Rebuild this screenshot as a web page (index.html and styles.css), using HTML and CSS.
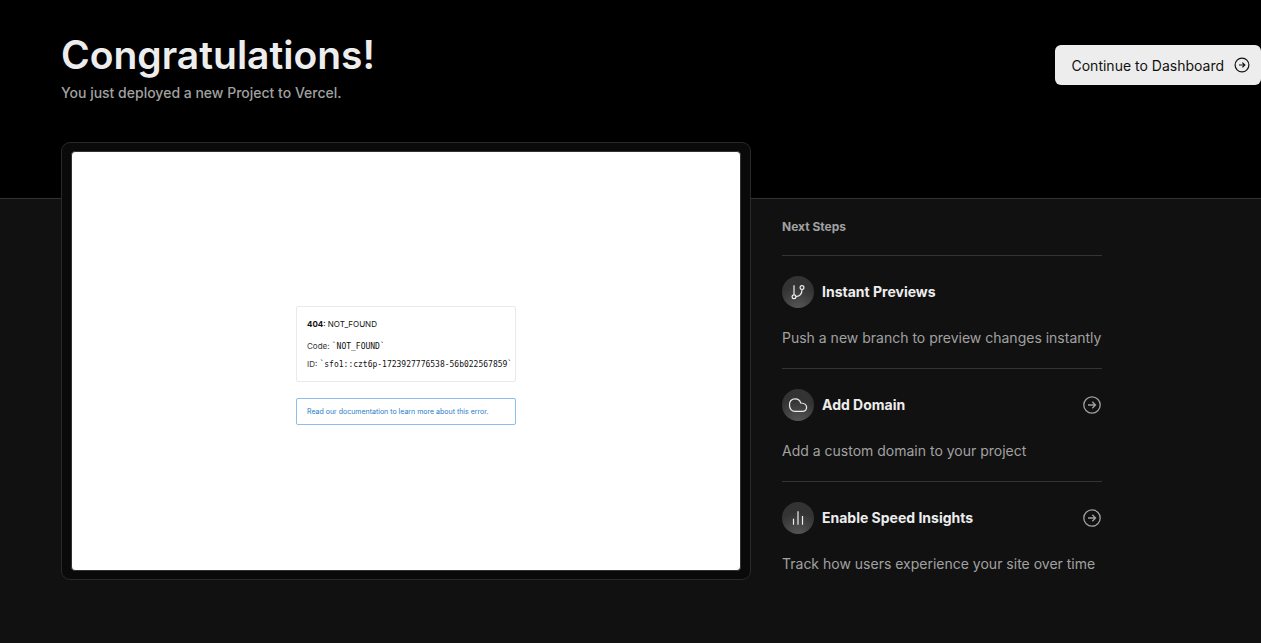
FILE: index.html
```html
<!DOCTYPE html>
<html lang="en">
<head>
<meta charset="utf-8">
<meta name="viewport" content="width=device-width, initial-scale=1">
<title>Congratulations!</title>
<link rel="stylesheet" href="styles.css">
</head>
<body>
<svg class="sprite" aria-hidden="true">
  <symbol id="arrow-circle" viewBox="0 0 18 18">
    <circle cx="9" cy="9" r="8.2"/>
    <path d="M5 9h7.500M9.300 5.800L12.500 9l-3.200 3.200"/>
  </symbol>
</svg>
<header class="hero">
  <div class="intro">
    <h1 class="title">Congratulations!</h1>
    <p class="subtitle">You just deployed a new Project to Vercel.</p>
  </div>
  <button class="continue" type="button">Continue to Dashboard
    <svg class="continue-icon" viewBox="0 0 16 16" aria-hidden="true"><circle cx="8" cy="8" r="6.9"/><path d="M5 8h5.800M8.400 5.600L10.800 8l-2.400 2.400"/></svg>
  </button>
</header>
<main class="content">
  <section class="preview">
    <div class="screen">
      <div class="error">
        <div class="error-box">
          <p class="error-title"><strong>404</strong>: NOT_FOUND</p>
          <p class="error-line">Code: <code>`NOT_FOUND`</code></p>
          <p class="error-line">ID: <code>`sfo1::czt6p-1723927776538-56b022567859`</code></p>
        </div>
        <a class="error-link" href="#">Read our documentation to learn more about this error.</a>
      </div>
    </div>
  </section>
  <aside class="steps">
    <h2 class="steps-title">Next Steps</h2>
    <article class="step">
      <div class="step-head">
        <span class="badge"><svg class="badge-icon" viewBox="0 0 20 20" aria-hidden="true"><path d="M6 3.200v9.600"/><circle cx="6" cy="14.700" r="1.900"/><circle cx="14" cy="5.600" r="1.900"/><path d="M14 7.500c0 3.800-2.300 6.800-6.100 7.200"/></svg></span>
        <h3 class="step-name">Instant Previews</h3>
      </div>
      <p class="step-text">Push a new branch to preview changes instantly</p>
    </article>
    <article class="step">
      <div class="step-head">
        <span class="badge"><svg class="badge-icon" viewBox="0 0 20 20" aria-hidden="true"><path d="M7 16.400C3.600 16.400 1.500 13.700 1.500 10 1.500 6.300 3.800 3.900 7.200 3.900c2.900 0 4.800 1.500 5.500 4.100 3.700.2 5.900 1.700 5.900 4.300 0 2.500-1.700 4.100-4.300 4.100z"/></svg></span>
        <h3 class="step-name">Add Domain</h3>
        <a class="step-link" href="#" aria-label="Add Domain"><svg class="step-arrow"><use href="#arrow-circle"/></svg></a>
      </div>
      <p class="step-text">Add a custom domain to your project</p>
    </article>
    <article class="step">
      <div class="step-head">
        <span class="badge"><svg class="badge-icon" viewBox="0 0 20 20" aria-hidden="true"><path d="M5.500 10.800v6M10 3.200v13.600M14.500 8v8.800"/></svg></span>
        <h3 class="step-name">Enable Speed Insights</h3>
        <a class="step-link" href="#" aria-label="Enable Speed Insights"><svg class="step-arrow"><use href="#arrow-circle"/></svg></a>
      </div>
      <p class="step-text">Track how users experience your site over time</p>
    </article>
  </aside>
</main>
</body>
</html>
```
FILE: styles.css
```css
* { box-sizing: border-box; }

body {
  margin: 0;
  background: #111;
  color: #ededed;
  font-family: Inter, "Liberation Sans", sans-serif;
}

h1, h2, h3, p { margin: 0; }

.sprite { display: none; }

.hero {
  display: flex;
  justify-content: space-between;
  align-items: flex-start;
  padding: 31px 0 94px 61px;
  background: #000;
  border-bottom: 1px solid #333;
}

.title {
  font-size: 39px;
  line-height: 48px;
  font-weight: 600;
}

.subtitle {
  margin-top: 3px;
  font-size: 14px;
  line-height: 22px;
  font-weight: 500;
  color: #a1a1a1;
}

.continue {
  display: flex;
  align-items: center;
  gap: 10px;
  height: 40px;
  margin-top: 14px;
  padding: 0 11px 0 17px;
  border: 0;
  border-radius: 6px;
  background: #ededed;
  color: #111;
  font-family: inherit;
  font-size: 14px;
}

.continue-icon {
  width: 16px;
  height: 16px;
  fill: none;
  stroke: #111;
  stroke-width: 1.2;
}

.content {
  display: flex;
  align-items: flex-start;
  gap: 31px;
  max-width: 1102px;
  margin-top: -57px;
  padding-left: 61px;
}

.preview {
  flex: 1;
  padding: 8px 9px;
  border: 1px solid #292929;
  border-radius: 9px;
  background: #0a0a0a;
}

.screen {
  display: flex;
  align-items: center;
  justify-content: center;
  aspect-ratio: 670 / 420;
  padding-top: 8px;
  border: 1px solid #333;
  border-radius: 4px;
  background: #fff;
}

.error {
  display: flex;
  flex-direction: column;
  gap: 16px;
  width: 220px;
  font-size: 8px;
  color: #333;
}

.error-box {
  padding: 10px 10px 8px;
  border: 1px solid #eaeaea;
  border-radius: 2px;
  white-space: nowrap;
}

.error-title {
  margin-bottom: 6px;
  line-height: 14px;
  color: #111;
}

.error-line { line-height: 18px; }

.error-line code {
  font-family: "DejaVu Sans Mono", monospace;
  font-size: 8px;
  line-height: 1;
  color: #111;
}

.error-link {
  padding: 6px 10px;
  border: 1px solid #8dbdea;
  border-radius: 2px;
  font-size: 7px;
  line-height: 13px;
  color: #2a7cc7;
  text-decoration: none;
}

.steps {
  width: 320px;
  padding-top: 75px;
}

.steps-title {
  padding-bottom: 18px;
  font-size: 12px;
  line-height: 20px;
  font-weight: 700;
  color: #a1a1a1;
}

.step {
  padding: 20px 0 19px;
  border-top: 1px solid #333;
}

.step-head {
  display: flex;
  align-items: center;
  gap: 8px;
}

.badge {
  display: grid;
  place-items: center;
  width: 32px;
  height: 32px;
  border-radius: 50%;
  background: radial-gradient(circle at 50% 110%, #5a5a5a 0, #333 65%);
}

.badge-icon {
  width: 20px;
  height: 20px;
  fill: none;
  stroke: #ededed;
  stroke-width: 1.2;
}

.step-name {
  flex: 1;
  font-size: 14px;
  line-height: 20px;
  font-weight: 700;
}

.step-link { display: flex; }

.step-arrow {
  width: 18px;
  height: 18px;
  margin-right: 1px;
  fill: none;
  stroke: #a1a1a1;
  stroke-width: 1.3;
}

.step-text {
  margin-top: 19px;
  font-size: 14px;
  line-height: 22px;
  color: #a1a1a1;
}
```
